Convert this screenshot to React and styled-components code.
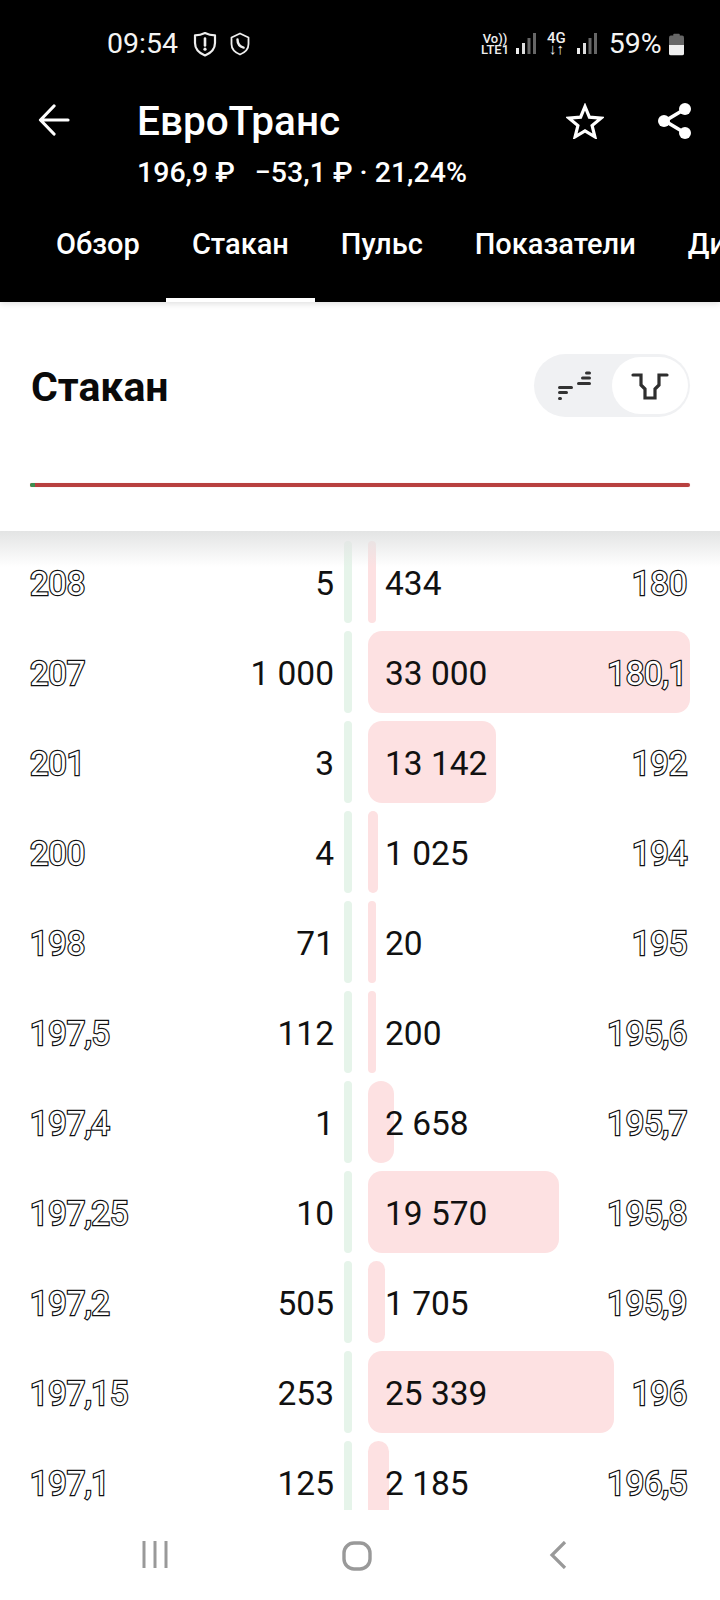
import React from "react";
import styled, { createGlobalStyle } from "styled-components";

const Global = createGlobalStyle`
  html, body { margin: 0; padding: 0; background: #fff; }
  body { font-family: Roboto, "Noto Sans", sans-serif; width: 720px; height: 1600px; overflow: hidden; }
  * { box-sizing: border-box; }
`;

const Screen = styled.div`
  width: 720px;
  height: 1600px;
  display: flex;
  flex-direction: column;
  overflow: hidden;
  background: #fff;
`;

const Header = styled.header`
  position: relative;
  z-index: 2;
  background: #000;
  color: #fff;
  height: 302px;
  display: flex;
  flex-direction: column;
  flex: none;
  box-shadow: 0 2px 6px rgba(0, 0, 0, 0.12);
`;

const StatusBar = styled.div`
  height: 86px;
  padding: 2px 40px 0 107px;
  display: flex;
  align-items: center;
  flex: none;
`;

const StatusText = styled.span`
  font-size: 28.5px;
  line-height: 1;
  color: #f4f4f4;
`;

const StatusGroup = styled.div`
  display: flex;
  align-items: center;
  gap: ${(p) => p.$gap || 0}px;
  margin-left: ${(p) => p.$ml || 0}px;
`;

const NetLabel = styled.span`
  display: flex;
  flex-direction: column;
  align-items: center;
  font-size: ${(p) => p.$size || 13}px;
  line-height: 11px;
  font-weight: 500;
  color: #eee;
`;

const TitleBar = styled.div`
  display: flex;
  align-items: flex-start;
  height: 106px;
  padding: 16px 27px 0 38px;
  flex: none;
`;

const BackSlot = styled.div`
  margin-top: 2px;
  flex: none;
`;

const TitleBlock = styled.div`
  margin-left: 67px;
  flex: 1;
  margin-top: -3px;
`;

const Title = styled.div`
  font-size: 40.5px;
  line-height: 44px;
  font-weight: 500;
`;

const Sub = styled.div`
  display: flex;
  margin-top: 14px;
  font-size: 28.5px;
  line-height: 32px;
  font-weight: 500;
  gap: 20px;
  white-space: nowrap;
`;

const HeaderActions = styled.div`
  display: flex;
  align-items: center;
  gap: 53px;
`;

const Tabs = styled.nav`
  display: flex;
  padding-left: 30px;
  height: 110px;
  overflow: hidden;
  flex: none;
`;

const Tab = styled.div`
  padding: 32px 26px 0;
  font-size: 29px;
  line-height: 40px;
  font-weight: 500;
  white-space: nowrap;
  flex: none;
  height: 110px;
  border-bottom: 4px solid ${(p) => (p.$active ? "#fff" : "transparent")};
`;

const Summary = styled.section`
  height: 229px;
  padding: 52px 30px 0;
  flex: none;
  display: flex;
  flex-direction: column;
`;

const SummaryTop = styled.div`
  display: flex;
  align-items: center;
  justify-content: space-between;
  height: 63px;
`;

const Heading = styled.h1`
  margin: 2px 0 0 1px;
  font-size: 41px;
  line-height: 48px;
  font-weight: 700;
  color: #0a0a0a;
`;

const Toggle = styled.div`
  width: 156px;
  height: 63px;
  border-radius: 32px;
  background: #f0f1f3;
  display: flex;
  align-items: center;
  justify-content: space-between;
  padding: 3px 2px 3px 24px;
`;

const Knob = styled.div`
  width: 76px;
  height: 57px;
  border-radius: 29px;
  background: #fff;
  display: flex;
  align-items: center;
  justify-content: center;
`;

const Balance = styled.div`
  height: 4px;
  margin-top: 66px;
  background: #b8403f;
  border-radius: 2px;
  box-shadow: 0 0 1px #f3b9b9;
  overflow: hidden;
`;

const BalanceBuy = styled.div`
  height: 100%;
  background: #3c8f50;
`;

const Book = styled.section`
  position: relative;
  height: 979px;
  flex: none;
  overflow: hidden;
  padding: 10px 30px 0;
  display: flex;
  flex-direction: column;
  gap: 8px;
`;

const TopShade = styled.div`
  position: absolute;
  left: 0;
  right: 0;
  top: 0;
  height: 36px;
  background: linear-gradient(#e3e4e4, rgba(255, 255, 255, 0));
  pointer-events: none;
`;

const Row = styled.div`
  display: flex;
  height: 82px;
  flex: none;
  align-items: stretch;
`;

const BidCell = styled.div`
  display: flex;
  align-items: center;
  justify-content: space-between;
  padding-top: 3px;
  width: 304px;
  flex: none;
`;

const Price = styled.span`
  font-size: 33px;
  line-height: 1;
  color: #fff;
  -webkit-text-stroke: 2.4px #111;
  paint-order: stroke fill;
  letter-spacing: -0.2px;
`;

const Qty = styled.span`
  font-size: 33.5px;
  line-height: 1;
  color: #111;
  white-space: pre;
`;

const BidBar = styled.div`
  width: 8px;
  margin-left: 10px;
  background: #e6f4ea;
  border-radius: 4px;
  flex: none;
`;

const AskCell = styled.div`
  position: relative;
  margin-left: 16px;
  display: flex;
  align-items: center;
  justify-content: space-between;
  padding: 3px 3px 0 17px;
  width: 322px;
  flex: none;
`;

const AskFill = styled.div`
  position: absolute;
  left: 0;
  top: 0;
  bottom: 0;
  background: #fde1e2;
  border-radius: 14px;
`;

const AskQty = styled(Qty)`
  position: relative;
`;

const AskPrice = styled(Price)`
  position: relative;
`;

const NavBar = styled.footer`
  flex: 1;
  background: #fff;
  display: flex;
  align-items: flex-start;
  padding-top: 31px;
`;

const NavSlot = styled.div`
  display: flex;
  justify-content: center;
  flex: none;
  width: ${(p) => p.$w}px;
`;

const rows = [
  ["208", "5", "434", "180", 8],
  ["207", "1 000", "33 000", "180,1", 322],
  ["201", "3", "13 142", "192", 128],
  ["200", "4", "1 025", "194", 10],
  ["198", "71", "20", "195", 8],
  ["197,5", "112", "200", "195,6", 8],
  ["197,4", "1", "2 658", "195,7", 26],
  ["197,25", "10", "19 570", "195,8", 191],
  ["197,2", "505", "1 705", "195,9", 17],
  ["197,15", "253", "25 339", "196", 246],
  ["197,1", "125", "2 185", "196,5", 21],
];

const ShieldAlert = () => (
  <svg width="24" height="26" viewBox="0 0 24 26" fill="none" stroke="#eee" strokeWidth="2.2">
    <path d="M12 2 C15 3.5 18.5 4.3 22 4.3 V12 C22 18 18 22 12 24.5 C6 22 2 18 2 12 V4.3 C5.5 4.3 9 3.5 12 2 Z" strokeLinejoin="round" />
    <path d="M12 7.5 V14.5" strokeLinecap="round" strokeWidth="2.6" />
    <circle cx="12" cy="18.2" r="1.6" fill="#eee" stroke="none" />
  </svg>
);

const ShieldPhone = () => (
  <svg width="20" height="24" viewBox="0 0 20 24" fill="none" stroke="#eee" strokeWidth="1.8">
    <path d="M10 1.5 L18.5 5.5 V12 C18.5 17.5 15 20.5 10 22.5 C5 20.5 1.5 17.5 1.5 12 V5.5 Z" strokeLinejoin="round" />
    <path d="M7.5 7.5 C7.5 11.5 9.8 14.6 13.6 15.6" strokeWidth="2.4" strokeLinecap="round" />
  </svg>
);

const Signal = () => (
  <svg width="20" height="22" viewBox="0 0 20 22">
    <rect x="0" y="15" width="3" height="6" fill="#eee" />
    <rect x="6" y="10" width="3" height="11" fill="#ddd" />
    <rect x="11.5" y="5" width="3" height="16" fill="#666" />
    <rect x="17" y="0" width="3" height="21" fill="#666" />
  </svg>
);

const Battery = () => (
  <svg width="15" height="23" viewBox="0 0 16 23">
    <rect x="4.5" y="0" width="7" height="3" rx="1" fill="#666" />
    <path d="M2 2 H14 A2 2 0 0 1 16 4 V12 H0 V4 A2 2 0 0 1 2 2 Z" fill="#666" />
    <path d="M0 12 H16 V21 A2 2 0 0 1 14 23 H2 A2 2 0 0 1 0 21 Z" fill="#eee" />
  </svg>
);

const BackArrow = () => (
  <svg width="32" height="32" viewBox="0 0 32 32" fill="none" stroke="#fff" strokeWidth="3.2" strokeLinecap="round" strokeLinejoin="round">
    <path d="M30 16 H3 M16 2 L2.5 16 L16 30" />
  </svg>
);

const Star = () => (
  <svg width="38" height="36" viewBox="0 0 38 36" fill="none" stroke="#fff" strokeWidth="3.2" strokeLinejoin="miter">
    <path d="M19 3.5 L23.4 14.2 L35 15.1 L26.1 22.6 L28.9 33.8 L19 27.8 L9.1 33.8 L11.9 22.6 L3 15.1 L14.6 14.2 Z" />
  </svg>
);

const Share = () => (
  <svg width="36" height="38" viewBox="0 0 36 38" fill="#fff" stroke="#fff">
    <path d="M28 7 L8 19 L28 31" fill="none" strokeWidth="3.6" />
    <circle cx="28" cy="7" r="6" stroke="none" />
    <circle cx="7" cy="19" r="6" stroke="none" />
    <circle cx="28" cy="31" r="6" stroke="none" />
  </svg>
);

const LadderIcon = () => (
  <svg width="34" height="30" viewBox="0 0 34 30" fill="none" stroke="#333" strokeWidth="3" strokeLinecap="round">
    <path d="M28.5 2 H31.5 M24.5 7 H31.5 M20.5 12.5 H31.5" />
    <path d="M1.5 16.5 H13.5 M1.5 21.5 H8.5 M1.5 27.5 H2.5" />
  </svg>
);

const DepthIcon = () => (
  <svg width="38" height="28" viewBox="0 0 38 28" fill="none" stroke="#2e2e2e" strokeWidth="3.2" strokeLinecap="round" strokeLinejoin="miter">
    <path d="M2 3 H10 V13 L14 17 V26 H24 V17 L28 13 V3 H36" />
  </svg>
);

const NavLines = () => (
  <svg width="26" height="28" viewBox="0 0 26 28" stroke="#999" strokeWidth="3" fill="none">
    <path d="M2 0 V27 M13 0 V27 M24 0 V27" />
  </svg>
);

const NavHome = () => (
  <svg width="30" height="30" viewBox="0 0 30 30" fill="none" stroke="#999" strokeWidth="3.4">
    <rect x="2" y="2" width="26" height="26" rx="10" />
  </svg>
);

const NavBack = () => (
  <svg width="18" height="28" viewBox="0 0 18 28" fill="none" stroke="#999" strokeWidth="3.2" strokeLinejoin="miter">
    <path d="M16 1 L3 14 L16 27" />
  </svg>
);

export default function App() {
  return (
    <Screen>
      <Global />
      <Header>
        <StatusBar>
          <StatusText>09:54</StatusText>
          <StatusGroup $gap={13} $ml={15}>
            <ShieldAlert />
            <ShieldPhone />
          </StatusGroup>
          <StatusGroup $gap={7} $ml={231}>
            <NetLabel>
              <span>Vo))</span>
              <span>LTE1</span>
            </NetLabel>
            <Signal />
          </StatusGroup>
          <StatusGroup $gap={11} $ml={11}>
            <NetLabel $size={15}>
              <span>4G</span>
              <span>↓↑</span>
            </NetLabel>
            <Signal />
          </StatusGroup>
          <StatusGroup $gap={7} $ml={12}>
            <StatusText>59%</StatusText>
            <Battery />
          </StatusGroup>
        </StatusBar>
        <TitleBar>
          <BackSlot>
            <BackArrow />
          </BackSlot>
          <TitleBlock>
            <Title>ЕвроТранс</Title>
            <Sub>
              <span>196,9 ₽</span>
              <span>−53,1 ₽ · 21,24%</span>
            </Sub>
          </TitleBlock>
          <HeaderActions>
            <Star />
            <Share />
          </HeaderActions>
        </TitleBar>
        <Tabs>
          <Tab>Обзор</Tab>
          <Tab $active>Стакан</Tab>
          <Tab>Пульс</Tab>
          <Tab>Показатели</Tab>
          <Tab>Дивиденды</Tab>
        </Tabs>
      </Header>
      <Summary>
        <SummaryTop>
          <Heading>Стакан</Heading>
          <Toggle>
            <LadderIcon />
            <Knob>
              <DepthIcon />
            </Knob>
          </Toggle>
        </SummaryTop>
        <Balance>
          <BalanceBuy style={{ width: "0.8%" }} />
        </Balance>
      </Summary>
      <Book>
        {rows.map(([bidPrice, bidQty, askQty, askPrice, fill]) => (
          <Row key={bidPrice}>
            <BidCell>
              <Price>{bidPrice}</Price>
              <Qty>{bidQty}</Qty>
            </BidCell>
            <BidBar />
            <AskCell>
              <AskFill style={{ width: fill }} />
              <AskQty>{askQty}</AskQty>
              <AskPrice>{askPrice}</AskPrice>
            </AskCell>
          </Row>
        ))}
        <TopShade />
      </Book>
      <NavBar>
        <NavSlot $w={310}><NavLines /></NavSlot>
        <NavSlot $w={93}><NavHome /></NavSlot>
        <NavSlot $w={310}><NavBack /></NavSlot>
      </NavBar>
    </Screen>
  );
}
